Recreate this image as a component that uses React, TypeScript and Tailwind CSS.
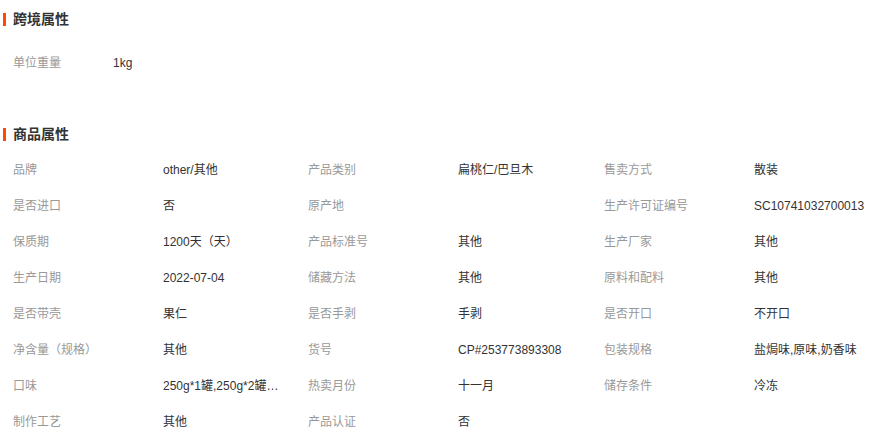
import React from "react";

type Attr = { label: string; value: string };

const crossBorder: Attr[] = [{ label: "单位重量", value: "1kg" }];

const goods: Attr[] = [
  { label: "品牌", value: "other/其他" },
  { label: "产品类别", value: "扁桃仁/巴旦木" },
  { label: "售卖方式", value: "散装" },
  { label: "是否进口", value: "否" },
  { label: "原产地", value: "" },
  { label: "生产许可证编号", value: "SC10741032700013" },
  { label: "保质期", value: "1200天（天）" },
  { label: "产品标准号", value: "其他" },
  { label: "生产厂家", value: "其他" },
  { label: "生产日期", value: "2022-07-04" },
  { label: "储藏方法", value: "其他" },
  { label: "原料和配料", value: "其他" },
  { label: "是否带壳", value: "果仁" },
  { label: "是否手剥", value: "手剥" },
  { label: "是否开口", value: "不开口" },
  { label: "净含量（规格）", value: "其他" },
  { label: "货号", value: "CP#253773893308" },
  { label: "包装规格", value: "盐焗味,原味,奶香味" },
  { label: "口味", value: "250g*1罐,250g*2罐,250g*3罐" },
  { label: "热卖月份", value: "十一月" },
  { label: "储存条件", value: "冷冻" },
  { label: "制作工艺", value: "其他" },
  { label: "产品认证", value: "否" },
];

const SectionTitle = ({ title, className }: { title: string; className: string }) => (
  <div className={`flex items-center ${className}`}>
    <span className="ml-[3px] h-[13px] w-[3px] bg-[#ff4a00]" />
    <span className="ml-[7px] text-[14px] font-bold text-[#333]">{title}</span>
  </div>
);

const AttrItem = ({ item, wide }: { item: Attr; wide?: boolean }) => (
  <div className="flex h-[36px] items-center text-[12px]">
    <span className={`${wide ? "w-[113px]" : "w-[163px]"} shrink-0 pl-[13px] text-[#999]`}>
      {item.label}
    </span>
    <span className="w-[118px] truncate text-[#333]">{item.value}</span>
  </div>
);

export default function App() {
  return (
    <div
      className="w-[873px] h-[437px] overflow-hidden bg-white"
      style={{ fontFamily: '"Liberation Sans", "Noto Sans CJK SC", sans-serif' }}
    >
      <SectionTitle title="跨境属性" className="mt-px h-[36px]" />
      <div className="mt-[8px]">
        {crossBorder.map((a) => (
          <AttrItem key={a.label} item={a} wide />
        ))}
      </div>
      <SectionTitle title="商品属性" className="mt-[36px] h-[35px]" />
      <div className="grid grid-cols-[295px_296px_282px]">
        {goods.map((a, idx) => (
          <AttrItem key={`${a.label}-${idx}`} item={a} />
        ))}
      </div>
    </div>
  );
}
